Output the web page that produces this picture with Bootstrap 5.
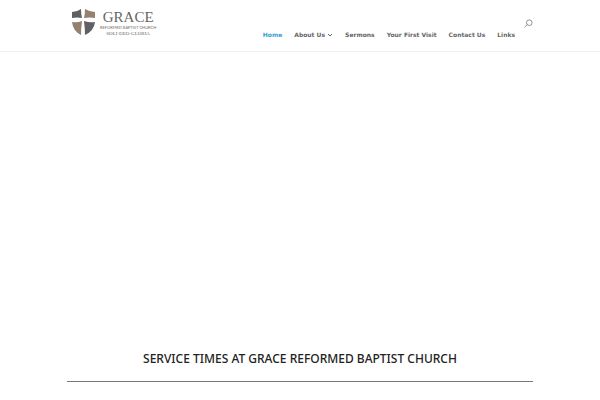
<!DOCTYPE html>
<html lang="en">
<head>
<meta charset="utf-8">
<meta name="viewport" content="width=device-width, initial-scale=1">
<title>Grace Reformed Baptist Church</title>
<link href="https://cdn.jsdelivr.net/npm/bootstrap@5.3.0/dist/css/bootstrap.min.css" rel="stylesheet">
<style>
body { font-family: "DejaVu Sans", sans-serif; color: #222; background: #fff; }
.site-header { border-bottom: 1px solid #f0f0f0; height: 52px; }
.page-width { width: 78%; margin: 0 auto; padding: 0 1px; }
.brand { gap: 4px; padding: 9px 0 0 4px; color: #666; }
.brand:hover { color: #444; }
.brand-words { font-family: "Liberation Serif", serif; }
.brand-name { font-size: 15px; line-height: 16px; }
.brand-sub { font-family: Lato, sans-serif; font-size: 4px; line-height: 5px; color: #756a60; }
.brand-motto { font-size: 5px; line-height: 8px; }
.main-menu { gap: 12px; padding: 30px 0 0; font-size: 6px; line-height: 9px; font-weight: 700; }
.main-menu .nav-link { padding: 0; color: #666; }
.main-menu .nav-link.active { color: #3a9fd0; }
.search-btn { margin: 19px 0 0 9px; line-height: 0; }
.hero { height: 75vh; }
.service-title { font-family: "Noto Sans", sans-serif; font-size: 12px; line-height: 14px; font-weight: 500; }
.rule { border-top: 1px solid #777; margin-top: 15px; opacity: 1; }
</style>
<script src="https://cdn.jsdelivr.net/npm/bootstrap@5.3.0/dist/js/bootstrap.bundle.min.js"></script>
</head>
<body>
<header class="site-header">
  <div class="page-width d-flex justify-content-between align-items-start">
    <a class="brand d-flex text-decoration-none" href="#">
      <svg width="25" height="27" viewBox="0 0 25 27" aria-hidden="true">
        <path fill="#625f64" d="M1 3Q6 3 10 0Q10 5 11 9Q6 8 1 9Z"/>
        <path fill="#94816e" d="M14 0Q19 3 24 3V9Q19 8 13 9Q14 5 14 0Z"/>
        <path fill="#94816e" d="M1 13Q6 14 11 12Q10 20 10 26Q2 22 1 13Z"/>
        <path fill="#625f64" d="M13 12Q19 14 24 13Q23 22 14 26Q14 20 13 12Z"/>
      </svg>
      <span class="brand-words d-flex flex-column text-center">
        <span class="brand-name">GRACE</span>
        <span class="brand-sub">REFORMED BAPTIST CHURCH</span>
        <span class="brand-motto">SOLI·DEO·GLORIA</span>
      </span>
    </a>
    <div class="d-flex align-items-start">
      <nav class="nav main-menu flex-nowrap text-nowrap" aria-label="Main">
        <a class="nav-link active" aria-current="page" href="#">Home</a>
        <a class="nav-link" href="#">About Us <svg width="6" height="4" viewBox="0 0 6 4" aria-hidden="true"><path d="M1 1L3 3L5 1" fill="none" stroke="currentColor"/></svg></a>
        <a class="nav-link" href="#">Sermons</a>
        <a class="nav-link" href="#">Your First Visit</a>
        <a class="nav-link" href="#">Contact Us</a>
        <a class="nav-link" href="#">Links</a>
      </nav>
      <button class="search-btn btn p-0 border-0" type="button" aria-label="Search">
        <svg width="9" height="9" viewBox="0 0 9 9" fill="none" stroke="#777" stroke-width=".8" aria-hidden="true"><circle cx="5.3" cy="3.7" r="2.8"/><path d="M3.3 5.7L.6 8.2"/></svg>
      </button>
    </div>
  </div>
</header>
<main>
  <div class="hero"></div>
  <section class="page-width">
    <h1 class="service-title text-center m-0">SERVICE TIMES AT GRACE REFORMED BAPTIST CHURCH</h1>
    <hr class="rule mb-0">
  </section>
</main>
</body>
</html>
